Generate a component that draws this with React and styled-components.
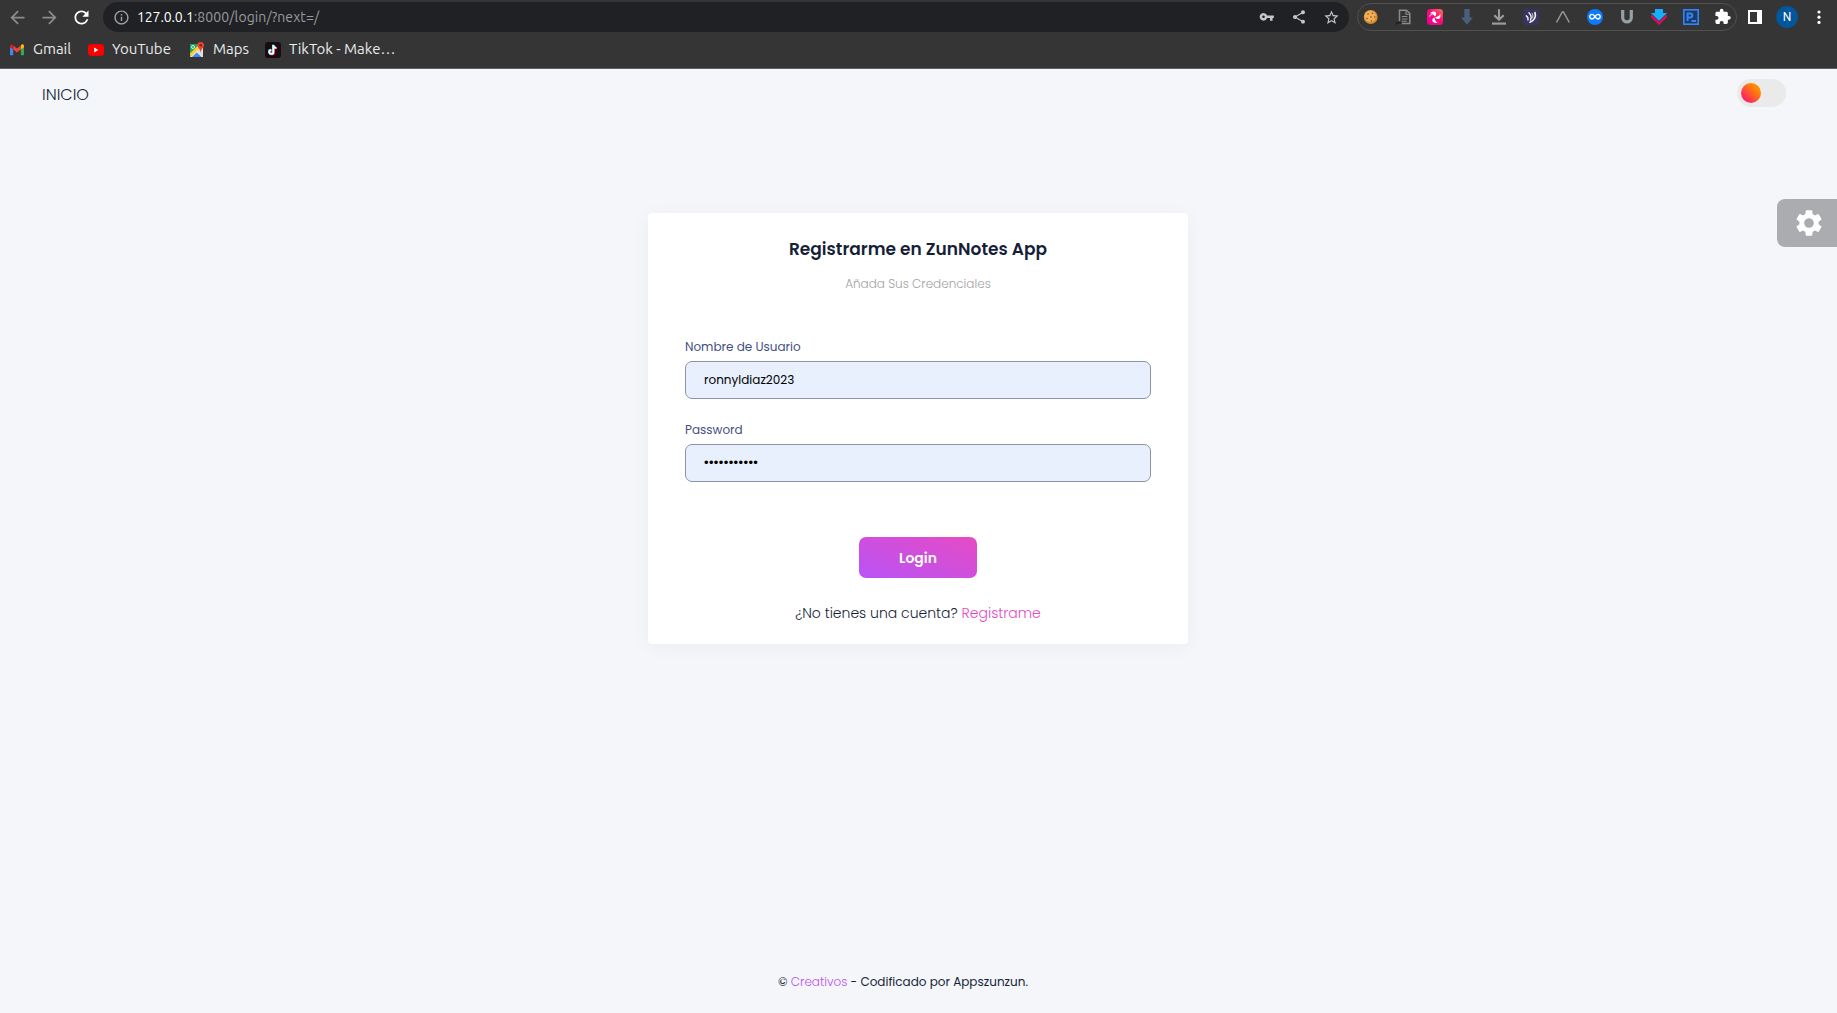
import React from 'react';
import styled, { createGlobalStyle } from 'styled-components';
import {
  MdArrowBack,
  MdArrowForward,
  MdRefresh,
  MdInfoOutline,
  MdVpnKey,
  MdShare,
  MdStarBorder,
  MdExtension,
  MdSettings,
} from 'react-icons/md';

const GlobalStyle = createGlobalStyle`
  *, *::before, *::after { box-sizing: border-box; }
  body {
    margin: 0;
    background: #f5f6fa;
    font-family: Poppins, Inter, sans-serif;
    color: #171f46;
  }
  a { text-decoration: none; }
`;

const Window = styled.div`
  display: flex;
  flex-direction: column;
  height: 1013px;
  overflow: hidden;
  position: relative;
`;

/* ---------- browser chrome ---------- */

const Chrome = styled.header`
  flex: none;
  height: 69px;
  background: #353535;
  border-bottom: 1px solid #5f5f5f;
  font-family: Ubuntu, 'Noto Sans', sans-serif;
  font-size: 15px;
`;

const Toolbar = styled.div`
  display: flex;
  align-items: center;
  height: 34px;
  padding: 0 0 0 1px;
`;

const IconSlot = styled.span`
  display: flex;
  align-items: center;
  justify-content: center;
  flex: none;
  width: 32px;
  height: 28px;
  color: ${(p) => p.$color || '#c4c6c9'};
  svg { display: block; flex: none; }
`;

const Omnibox = styled.div`
  display: flex;
  align-items: center;
  flex: none;
  width: 1246px;
  height: 30px;
  margin-left: 6px;
  padding: 0 2px;
  border-radius: 15px;
  background: #202124;
`;

const Address = styled.div`
  flex: 1;
  color: #999b9e;
  font-size: 14px;
  letter-spacing: 0.1px;
  white-space: nowrap;
`;

const Host = styled.span`
  color: #fff;
  letter-spacing: -0.1px;
`;

const Extensions = styled.div`
  display: flex;
  flex: none;
  align-items: center;
  justify-content: center;
  width: 380px;
  height: 28px;
  margin: 0 2px 0 8px;
  border: 1px solid #505050;
  border-radius: 14px;
`;

const Avatar = styled.span`
  width: 22px;
  height: 22px;
  border-radius: 50%;
  background: #01579b;
  color: #fff;
  font: 400 12px/22px Roboto, sans-serif;
  text-align: center;
`;

const Bookmarks = styled.nav`
  display: flex;
  align-items: center;
  height: 32px;
  padding-left: 9px;
`;

const Bookmark = styled.a`
  display: flex;
  align-items: center;
  width: ${(p) => p.$width}px;
  gap: 8px;
  color: #e9eaed;
  line-height: 18px;
  white-space: nowrap;
  svg { flex: none; }
`;

const BookmarkName = styled.span`
  padding-bottom: 2px;
`;

/* ---------- page ---------- */

const Page = styled.main`
  flex: 1;
  display: flex;
  flex-direction: column;
  align-items: center;
`;

const TopNav = styled.div`
  display: flex;
  align-items: center;
  justify-content: space-between;
  width: 100%;
  height: 48px;
  padding: 0 51px 0 42px;
`;

const NavLink = styled.a`
  padding-top: 3px;
  color: #171f38;
  font-weight: 300;
  font-size: 16px;
  line-height: 24px;
`;

const Toggle = styled.span`
  display: flex;
  align-items: center;
  width: 49px;
  height: 28px;
  padding: 4px;
  border-radius: 14px;
  background: #eaeaea;
`;

const Knob = styled.span`
  width: 20px;
  height: 20px;
  border-radius: 50%;
  background: linear-gradient(to top right, #ff0080, #ff8c00 75%);
`;

const Card = styled.section`
  display: flex;
  flex-direction: column;
  align-items: center;
  width: 540px;
  height: 431px;
  margin: 96px 1px 0 0;
  padding: 22px 37px 0;
  border-radius: 4px;
  background: #fff;
  box-shadow: 0 3px 20px rgba(20, 25, 50, 0.045);
`;

const Title = styled.h1`
  margin: 0;
  color: #171f38;
  font-weight: 600;
  font-size: 17px;
  line-height: 28px;
`;

const Subtitle = styled.p`
  margin: 11px 0 43px;
  color: #a3a3a3;
  font-weight: 300;
  font-size: 12px;
  line-height: 20px;
`;

const Field = styled.label`
  display: flex;
  flex-direction: column;
  gap: 4px;
  width: 466px;
  & + & { margin-top: 21px; }
`;

const FieldName = styled.span`
  color: #434f82;
  font-size: 12px;
  line-height: 20px;
`;

const FieldBox = styled.span`
  display: block;
  height: 38px;
  padding-left: 18px;
  border: 1px solid #8d93a5;
  border-radius: 7px;
  background: #e8f0fe;
  color: #000;
  font-size: 12px;
  line-height: 36px;
`;

const Masked = styled.span`
  font-family: 'Liberation Sans', sans-serif;
  font-size: 13px;
  letter-spacing: 0.38px;
`;

const LoginButton = styled.button`
  width: 118px;
  height: 41px;
  margin: 55px 0 24px;
  padding: 0;
  border: 0;
  border-radius: 7px;
  background: linear-gradient(21deg, #b853f6, #e64bc4);
  color: #fff;
  font: 600 14px/22px Poppins, Inter, sans-serif;
`;

const Signup = styled.p`
  margin: 0;
  color: #171f38;
  font-weight: 300;
  font-size: 14px;
  line-height: 22px;
`;

const AccentLink = styled.a`
  color: ${(p) => p.$color};
  font-weight: 300;
`;

const Footer = styled.footer`
  margin-top: auto;
  margin-right: 31px;
  margin-bottom: 21px;
  color: #171f38;
  font-size: 12px;
  line-height: 20px;
`;

const SettingsTab = styled.button`
  position: absolute;
  top: 199px;
  right: 0;
  display: flex;
  align-items: center;
  width: 60px;
  height: 48px;
  padding: 0 0 0 16px;
  border: 0;
  border-radius: 8px 0 0 8px;
  background: #abacb0;
  color: #fff;
`;

/* ---------- drawings ---------- */

const Svg = ({ size = 16, children }) => (
  <svg width={size} height={size} viewBox="0 0 16 16" fill="none">{children}</svg>
);

const Cookie = () => (
  <Svg>
    <circle cx="7.7" cy="8" r="7" fill="#d98a2b" />
    <circle cx="7.2" cy="7.3" r="5.8" fill="#efae57" />
    <g fill="#8a5222">
      <circle cx="5" cy="5" r=".8" /><circle cx="9.4" cy="4.2" r=".8" />
      <circle cx="8" cy="8" r=".8" /><circle cx="4" cy="9.5" r=".8" />
      <circle cx="11.7" cy="8" r=".8" /><circle cx="8.4" cy="12" r=".8" />
    </g>
  </Svg>
);

const Scroll = () => (
  <Svg>
    <path d="M4.500 12V1.200h7L14.800 4.500V14.500H4" stroke="#8a8b8d" strokeWidth="1.500" />
    <path d="M0 15.300h7l-1-2.300H1z" fill="#242424" />
    <path d="M11 1.500v3.700h3.500M6.800 7.500h5.500M6.800 10h5.500M6.800 12.300h5" stroke="#8a8b8d" strokeWidth="1.100" />
  </Svg>
);

const Pinwheel = () => (
  <Svg>
    <defs>
      <linearGradient id="pin" x1="0" y1="16" x2="14" y2="0" gradientUnits="userSpaceOnUse">
        <stop stopColor="#e6009c" /><stop offset=".6" stopColor="#fb0a78" /><stop offset="1" stopColor="#ff6a5a" />
      </linearGradient>
    </defs>
    <rect width="16" height="16" rx="3.500" fill="url(#pin)" />
    <path d="M3 4.200C5.500 1.800 9 2.300 9.200 4.500 9.300 6.300 8.500 7 8 7.500 6.500 5.500 5 4.500 3 4.200zM13.300 5c.8 3.200-.7 5.300-2.600 5C9 9.700 8.600 8.700 8.300 8c2.400-.3 4-1.300 5-3zM10.700 13.800C7.500 14.600 5 13 5.300 11c.3-1.700 1.300-2.300 2.200-2.500.2 2.400 1.400 4.300 3.200 5.300z" fill="#fff" />
    <path d="M2.800 7.500c0-1.500 1.300-2.300 2.500-1.600" stroke="#fff" strokeWidth="1" />
  </Svg>
);

const BlueArrow = () => (
  <Svg><path d="M5.300 0h5.400v8.500H14L8 15.800 2 8.500h3.300z" fill="#4b6078" /></Svg>
);

const Download = () => (
  <Svg>
    <path d="M8 .3v10M3.300 6.200L8 10.800l4.700-4.600" stroke="#9b9b9b" strokeWidth="2.100" />
    <path d="M1 14.600h14" stroke="#9b9b9b" strokeWidth="2.200" />
  </Svg>
);

const Waves = () => (
  <Svg>
    <rect width="16" height="16" rx="2.500" fill="#35355f" />
    <path d="M3.300 6.800c1.500 1 2 2.300 1.700 4.200M6 3.800c2 1.900 2.700 4.300 1.600 7.300" stroke="#f2f2f6" strokeWidth="1.400" strokeLinecap="round" />
    <path d="M12 3.500c1.200 4.200-.8 8-5 9.700" stroke="#f2f2f6" strokeWidth="1.700" strokeLinecap="round" />
    <path d="M9.300 4.500c.7 1.500.8 3 .4 4.500" stroke="#f2f2f6" strokeWidth=".9" strokeLinecap="round" />
  </Svg>
);

const Caret = () => (
  <Svg><path d="M1.500 13.500L7.300 3h1.200l5.800 10.500" stroke="#98999b" strokeWidth="1.500" /></Svg>
);

const Loop = () => (
  <Svg>
    <circle cx="8" cy="8" r="8" fill="#0a7aff" />
    <path d="M8 7.600C6.800 5.800 5.900 5.400 5.100 5.400a2.300 2.300 0 100 4.600C6.300 10 7 9.200 8 7.600s1.900-2.200 2.900-2.200a2.300 2.300 0 110 4.600C10 10 9.200 9.400 8 7.600z" stroke="#fff" strokeWidth="1.400" />
  </Svg>
);

const LetterU = () => (
  <Svg><path d="M3.700 1v7.500c0 5.800 8.600 5.800 8.600 0V1" stroke="#95a0a4" strokeWidth="3.200" /></Svg>
);

const DoubleDown = () => (
  <Svg>
    <path d="M0 6.500l8 8 8-8" stroke="#e8065f" strokeWidth="2.200" />
    <path d="M4 0h8v4h4l-8 8-8-8h4z" fill="#14aefb" />
  </Svg>
);

const Prompt = () => (
  <Svg>
    <rect x=".8" y=".8" width="14.400" height="14.400" fill="#1f3a66" stroke="#2f86f4" strokeWidth="1.600" />
    <path d="M4.600 12V4.400h2.700c2.600 0 2.600 4 0 4H5M8.500 12H13" stroke="#2f86f4" strokeWidth="2" />
  </Svg>
);

const SidePanel = () => (
  <Svg><path d="M1 1h14v14H1zM3 3v10h7V3z" fill="#fff" fillRule="evenodd" /></Svg>
);

const MoreDots = () => (
  <Svg>
    <g fill="#fff"><circle cx="8" cy="3" r="1.600" /><circle cx="8" cy="8.200" r="1.600" /><circle cx="8" cy="13.400" r="1.600" /></g>
  </Svg>
);

const Gmail = () => (
  <svg width="16" height="16" viewBox="0 0 16 16">
    <path d="M1 4v8.200c0 .6.400 1 1 1h2.200V6.500z" fill="#4285f4" />
    <path d="M15 4v8.200c0 .6-.4 1-1 1h-2.200V6.500z" fill="#34a853" />
    <path d="M11.800 3.800v3.800L15 5.200V4c0-1.700-1.700-2-2.600-1.300z" fill="#fbbc04" />
    <path d="M4.200 7.600V3.500L8 6.400l3.800-2.900v4.100L8 10.500z" fill="#ea4335" />
    <path d="M1 4v1.200l3.200 2.400V3.500l-.7-.6C2.600 2.100 1 2.500 1 4z" fill="#c5221f" />
  </svg>
);

const YouTube = () => (
  <svg width="16" height="16" viewBox="0 0 16 16">
    <rect y="2.300" width="16" height="11.400" rx="3" fill="#f00" />
    <path d="M6.200 5.600v4.800l4.200-2.400z" fill="#fff" />
  </svg>
);

const Maps = () => (
  <svg width="16" height="16" viewBox="0 0 16 16">
    <path d="M1 2h13v13H1z" fill="#e6e8ea" />
    <path d="M1 2h9L8 8l-7 7z" fill="#1fa463" />
    <path d="M1 11.500L10 2.500l1 3.500-9.500 9z" fill="#fdd12b" />
    <path d="M3 15l4.800-4.600L12.500 15z" fill="#4385f5" />
    <path d="M8.800 9.500L11 7.400l3 3.600v4z" fill="#dadce0" />
    <circle cx="4" cy="5" r="1.500" fill="none" stroke="#e8f5ec" strokeWidth=".9" />
    <path d="M11.700 0a3.300 3.300 0 00-3.300 3.300c0 2.200 2.600 3.400 3.300 7.200.7-3.800 3.300-5 3.300-7.200A3.300 3.300 0 0011.700 0z" fill="#ea4335" />
    <circle cx="11.700" cy="3.300" r="1.200" fill="#8c1a12" />
  </svg>
);

const note = 'M8.200 3v6.900a2 2 0 11-2-2M8.200 3c.2 1.700 1.300 2.700 3 2.900';

const TikTok = () => (
  <svg width="16" height="16" viewBox="0 0 16 16" fill="none" strokeWidth="1.700">
    <rect width="16" height="16" rx="3" fill="#170b14" />
    <path d={note} stroke="#25f4ee" transform="translate(-.4 -.3)" />
    <path d={note} stroke="#fe2c55" transform="translate(.9 .5)" />
    <path d={note} stroke="#fff" transform="translate(.2 .1)" />
  </svg>
);

const extensions = [Cookie, Scroll, Pinwheel, BlueArrow, Download, Waves, Caret, Loop, LetterU, DoubleDown, Prompt];

const bookmarks = [
  { label: 'Gmail', Icon: Gmail, width: 79 },
  { label: 'YouTube', Icon: YouTube, width: 101 },
  { label: 'Maps', Icon: Maps, width: 76 },
  { label: 'TikTok - Make…', Icon: TikTok, width: 130 },
];

function BrowserChrome() {
  return (
    <Chrome>
      <Toolbar>
        <IconSlot $color="#8c8c8c"><MdArrowBack size={21} /></IconSlot>
        <IconSlot $color="#8c8c8c"><MdArrowForward size={21} /></IconSlot>
        <IconSlot $color="#fff"><MdRefresh size={21} /></IconSlot>
        <Omnibox>
          <IconSlot $color="#a0a2a5"><MdInfoOutline size={17} /></IconSlot>
          <Address><Host>127.0.0.1</Host>:8000/login/?next=/</Address>
          <IconSlot><MdVpnKey size={15.5} /></IconSlot>
          <IconSlot><MdShare size={16} /></IconSlot>
          <IconSlot><MdStarBorder size={17} /></IconSlot>
        </Omnibox>
        <Extensions>
          {extensions.map((Icon, i) => <IconSlot key={i}><Icon /></IconSlot>)}
          <IconSlot $color="#fff"><MdExtension size={17.5} /></IconSlot>
        </Extensions>
        <IconSlot><SidePanel /></IconSlot>
        <IconSlot><Avatar>N</Avatar></IconSlot>
        <IconSlot><MoreDots /></IconSlot>
      </Toolbar>
      <Bookmarks>
        {bookmarks.map(({ label, Icon, width }) => (
          <Bookmark key={label} $width={width}>
            <Icon />
            <BookmarkName>{label}</BookmarkName>
          </Bookmark>
        ))}
      </Bookmarks>
    </Chrome>
  );
}

export default function App() {
  return (
    <Window>
      <GlobalStyle />
      <BrowserChrome />
      <Page>
        <TopNav>
          <NavLink>INICIO</NavLink>
          <Toggle><Knob /></Toggle>
        </TopNav>
        <Card>
          <Title>Registrarme en ZunNotes App</Title>
          <Subtitle>Añada Sus Credenciales</Subtitle>
          <Field>
            <FieldName>Nombre de Usuario</FieldName>
            <FieldBox>ronnyldiaz2023</FieldBox>
          </Field>
          <Field>
            <FieldName>Password</FieldName>
            <FieldBox><Masked>•••••••••••</Masked></FieldBox>
          </Field>
          <LoginButton>Login</LoginButton>
          <Signup>¿No tienes una cuenta? <AccentLink $color="#e64bc4">Registrame</AccentLink></Signup>
        </Card>
        <Footer>
          © <AccentLink $color="#b853f6">Creativos</AccentLink> - Codificado por Appszunzun.
        </Footer>
      </Page>
      <SettingsTab><MdSettings size={32} /></SettingsTab>
    </Window>
  );
}
